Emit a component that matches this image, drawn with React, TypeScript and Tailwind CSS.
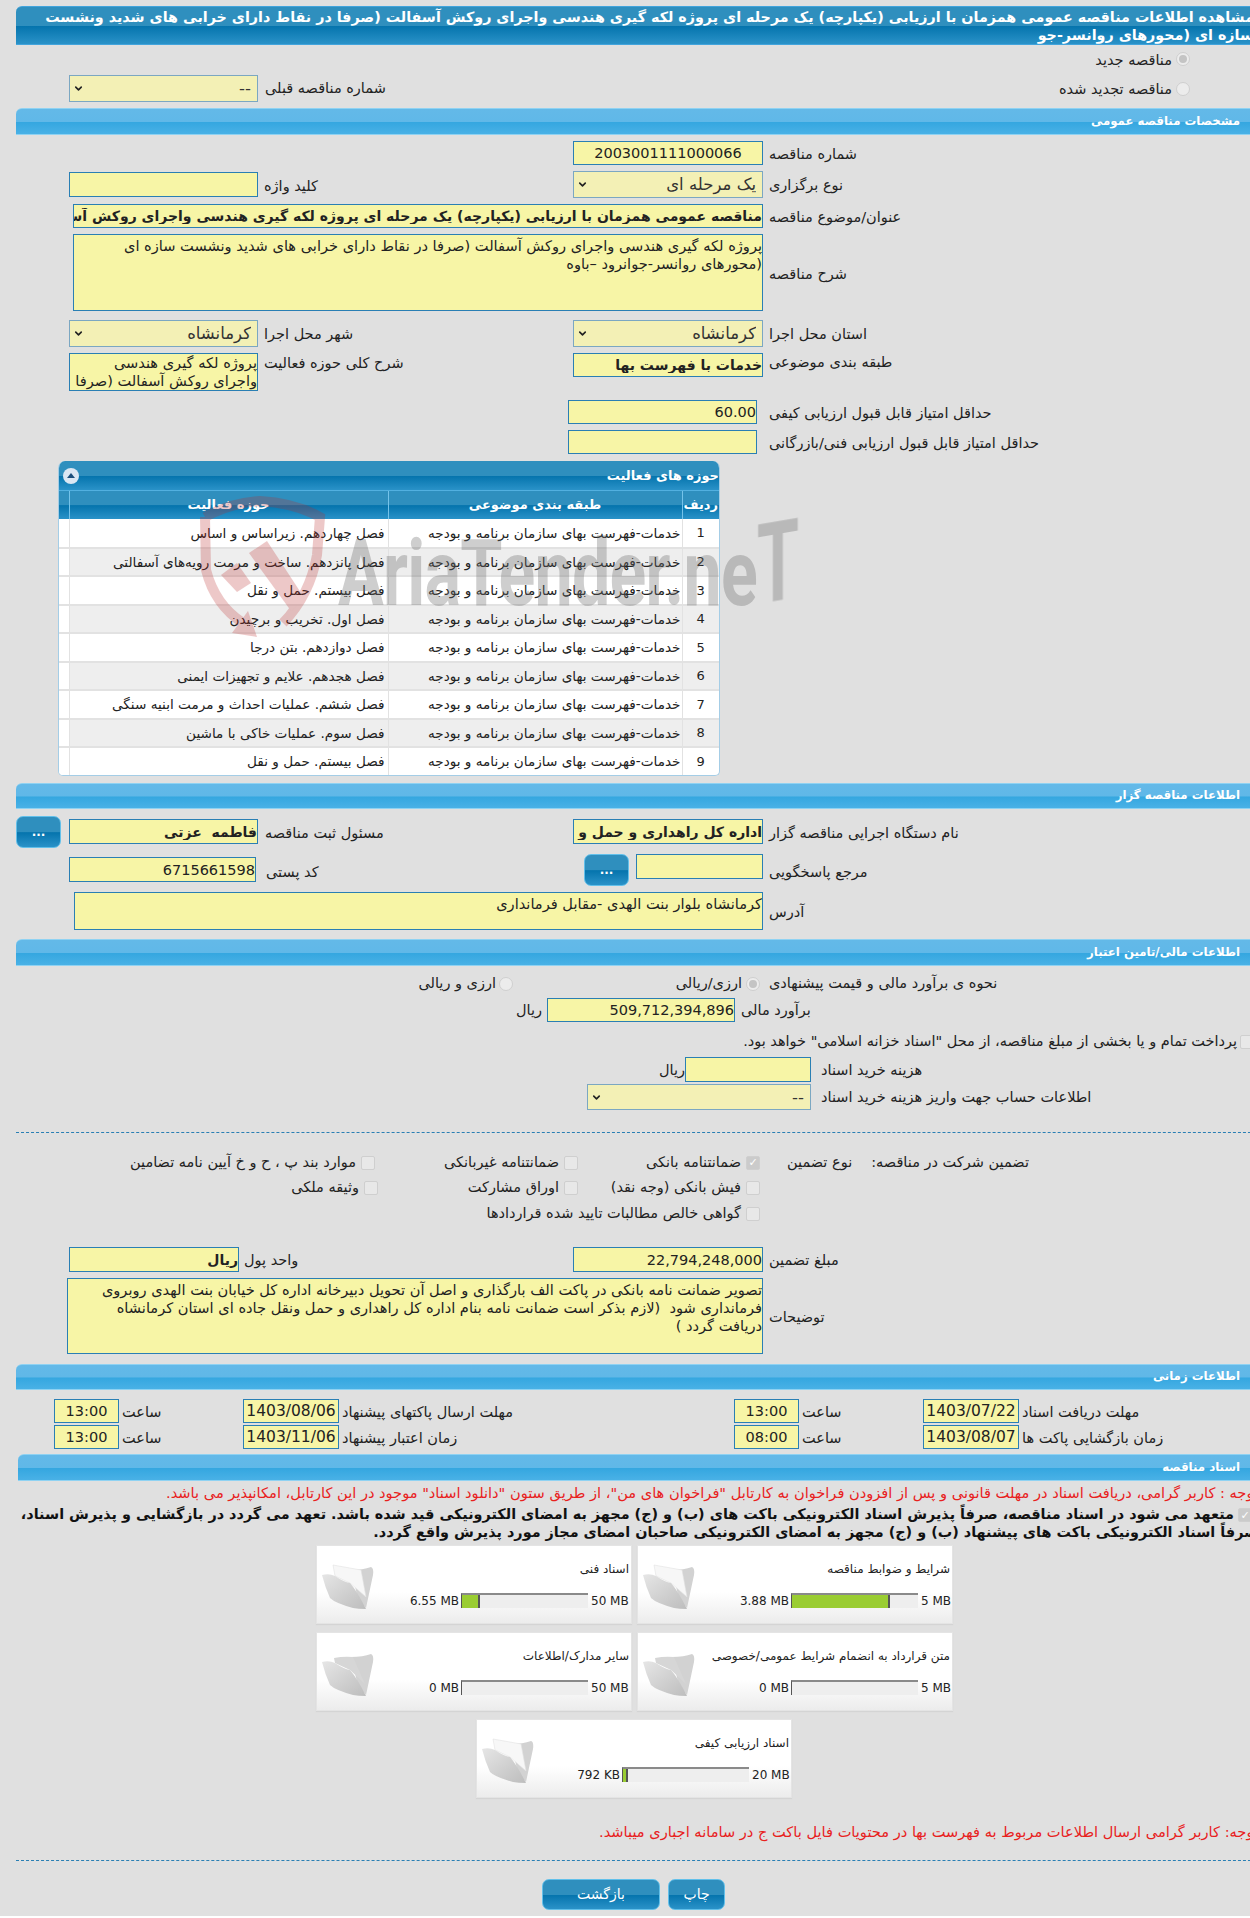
import { ChevronDown } from 'lucide-react';

const darkGloss = 'bg-[linear-gradient(#2f8fbe_0,#2f8fbe_50%,#0574ad_52%,#2a92c8_100%)]';

const SectionBar = ({ title, className = '' }: { title: string; className?: string }) => (
  <div
    dir="rtl"
    className={`flex h-[27px] items-center rounded-tr-none rounded-tl-[6px] border-t border-b border-[#8fd2f2] bg-[linear-gradient(#63b9e8_0,#60b8e8_50%,#35a7e0_54%,#49b1e6_100%)] pr-[22px] text-[11.75px] font-bold text-white ${className}`}
  >
    {title}
  </div>
);

const Field = ({ value = '', className = '' }: { value?: string; className?: string }) => (
  <input
    readOnly
    dir="rtl"
    value={value}
    className={`shrink-0 border border-[#2a7fb4] bg-[#f7f5a6] text-[#222] outline-none ${className}`}
  />
);

const Area = ({ value, className = '' }: { value: string; className?: string }) => (
  <textarea
    readOnly
    dir="rtl"
    wrap="off"
    value={value}
    className={`shrink-0 resize-none overflow-hidden border border-[#2a7fb4] bg-[#f7f5a6] pt-[2px] text-[14.6px] leading-[18px] text-[#222] outline-none ${className}`}
  />
);

const Select = ({ value, className = '' }: { value: string; className?: string }) => (
  <div className={`relative shrink-0 ${className}`}>
    <select
      dir="rtl"
      defaultValue={value}
      className="h-full w-full appearance-none border border-[#7ba7c2] bg-[#f3f0b5] pt-[1px] pr-[6px] text-[16.5px] text-[#333] outline-none"
    >
      <option>{value}</option>
    </select>
    <ChevronDown strokeWidth={3.5} className="pointer-events-none absolute top-[8px] left-[4px] h-[11px] w-[11px] text-[#222]" />
  </div>
);

const Label = ({ text, className = '' }: { text: string; className?: string }) => (
  <span dir="rtl" className={`whitespace-nowrap text-[14.5px] text-[#222] ${className}`}>
    {text}
  </span>
);

const Radio = ({ checked = false }: { checked?: boolean }) => (
  <span className="flex h-[14px] w-[14px] shrink-0 items-center justify-center rounded-full border border-[#cfcfcf] bg-[#ececec]">
    {checked && <span className="h-[8px] w-[8px] rounded-full bg-[#c4c4c4]" />}
  </span>
);

const Check = ({ checked = false }: { checked?: boolean }) => (
  <span className="flex h-[14px] w-[14px] shrink-0 items-center justify-center rounded-[2px] border border-[#cfcfcf] bg-[#e8e8e8] text-[11px] leading-none text-white">
    {checked && <span className="flex h-full w-full items-center justify-center bg-[#cbcbcb]">✓</span>}
  </span>
);

const GlossButton = ({ text, className = '' }: { text: string; className?: string }) => (
  <button
    type="button"
    dir="rtl"
    className={`flex shrink-0 items-center justify-center rounded-[7px] border border-[#62c0ea] text-white ${darkGloss} ${className}`}
  >
    {text}
  </button>
);

const Folder = ({ paper }: { paper: boolean }) => (
  <svg viewBox="0 0 54 46" className="mt-[17px] ml-[3px] h-[46px] w-[54px] shrink-0">
    <defs>
      <linearGradient id="flap" x1="0" y1="0" x2="1" y2="1">
        <stop offset="0" stopColor="#e6e6e6" />
        <stop offset="1" stopColor="#bdbdbd" />
      </linearGradient>
    </defs>
    <path d="M31 7 Q43 7 51 4 Q54 5 53 12 L46 45 L38 36 Z" fill="#d2d2d2" />
    {paper && <path d="M13 2 L41 7 L46 34 L30 20 L15 13 Z" fill="#f7f7f7" stroke="#e2e2e2" strokeWidth="0.6" />}
    {!paper && <path d="M14 8 Q24 6 33 7 L45 34 L30 20 L15 13 Z" fill="#d6d6d6" />}
    <path d="M2 12 Q9 10 15 13 Q24 19 30 20 Q37 28 46 46 Q38 46 33 45 Q15 40 10 35 Q5 24 2 12 Z" fill="url(#flap)" />
  </svg>
);

const DocCard = ({
  title,
  size,
  max,
  percent,
  maxClass,
  paper,
}: {
  title: string;
  size: string;
  max: string;
  percent: number;
  maxClass: string;
  paper: boolean;
}) => (
  <div className="flex h-[79px] w-[316px] shrink-0 border border-[#e4e4e4] bg-[linear-gradient(#fff_0,#fff_60%,#ececec_100%)] shadow-[0_1px_1px_#d4d4d4]">
    <Folder paper={paper} />
    <div className="flex-1">
      <div dir="rtl" className="mt-[14px] h-[18px] pr-[2px] text-[12px] leading-[18px] text-[#222]">
        {title}
      </div>
      <div className="mt-[15px] flex h-[15px] items-center justify-end text-[12px] text-[#222]">
        <span className="mr-[2px] whitespace-nowrap">{size}</span>
        <div className="h-[15px] w-[127px] border-t-2 border-l border-[#8a8a8a] border-l-[#555] bg-[#eeeeee]">
          {percent > 0 && (
            <div className="h-full border-r-2 border-[#555] bg-[#9acd32]" style={{ width: `${percent}%` }} />
          )}
        </div>
        <span className={`whitespace-nowrap pl-[3px] ${maxClass}`}>{max}</span>
      </div>
    </div>
  </div>
);

const rows = [
  'فصل چهاردهم. زیراساس و اساس',
  'فصل پانزدهم. ساخت و مرمت رویه‌های آسفالتی',
  'فصل بیستم. حمل و نقل',
  'فصل اول. تخریب و برچیدن',
  'فصل دوازدهم. بتن درجا',
  'فصل هجدهم. علایم و تجهیزات ایمنی',
  'فصل ششم.  عملیات احداث و مرمت ابنیه سنگی',
  'فصل سوم. عملیات خاکی با ماشین',
  'فصل بیستم. حمل و نقل',
];

const App = () => {
  return (
    <div className="h-[1918px] w-[1250px] overflow-hidden bg-white font-['DejaVu_Sans',sans-serif]">
      <div className="h-[1916px] overflow-hidden bg-[#e0e0e0] pt-[6px] pl-[16px]">
        <div className="w-[1234px]">
          {/* page title */}
          <div
            dir="rtl"
            className={`-mr-[12px] h-[39px] overflow-hidden rounded-tl-[6px] border-y border-[#42a4dc] pt-[1px] pr-[8px] text-[14.3px] leading-[18px] font-bold whitespace-nowrap text-white ${darkGloss}`}
          >
            مشاهده اطلاعات مناقصه عمومی همزمان با ارزیابی (یکپارچه) یک مرحله ای پروژه لکه گیری هندسی واجرای روکش آسفالت (صرفا در نقاط دارای خرابی های شدید ونشست
            <br />
            سازه ای (محورهای روانسر-جو
          </div>

          <div className="mt-[2px] flex h-[24px] items-center justify-end pr-[60px]">
            <Label text="مناقصه جدید" className="mt-[3px] mr-[4px]" />
            <Radio checked />
          </div>
          <div className="mt-[4px] flex h-[27px] items-center">
            <div className="flex flex-1 items-center pl-[53px]">
              <Select value="--" className="h-[27px] w-[189px]" />
              <Label text="شماره مناقصه قبلی" className="mt-[1px] ml-[7px]" />
            </div>
            <div className="mr-[60px] flex items-center">
              <Label text="مناقصه تجدید شده" className="mt-[2px] mr-[4px]" />
              <Radio />
            </div>
          </div>

          <SectionBar title="مشخصات مناقصه عمومی" className="mt-[6px] -mr-[12px]" />

          <div className="mt-[6px] flex h-[24px] pl-[557px]">
            <Field value="2003001111000066" className="h-[24px] w-[190px] text-center text-[14.5px]" />
            <Label text="شماره مناقصه" className="ml-[6px] leading-[26px]" />
          </div>
          <div className="mt-[6px] grid h-[27px] grid-cols-[557px_1fr]">
            <div className="flex pl-[53px]">
              <Field className="mt-[1px] h-[25px] w-[189px]" />
              <Label text="کلید واژه" className="ml-[6px] leading-[30px]" />
            </div>
            <div className="flex">
              <Select value="یک مرحله ای" className="h-[27px] w-[190px]" />
              <Label text="نوع برگزاری" className="ml-[6px] leading-[29px]" />
            </div>
          </div>
          <div className="mt-[6px] flex h-[24px] pl-[57px]">
            <Field
              value="مناقصه عمومی همزمان با ارزیابی (یکپارچه) یک مرحله ای پروژه لکه گیری هندسی واجرای روکش آسفالت"
              className="h-[24px] w-[690px] text-[14px] font-bold"
            />
            <Label text="عنوان/موضوع مناقصه" className="ml-[6px] leading-[26px]" />
          </div>
          <div className="mt-[6px] flex h-[77px] items-center pl-[57px]">
            <Area
              value={'پروژه لکه گیری هندسی واجرای روکش آسفالت (صرفا در نقاط دارای خرابی های شدید ونشست سازه ای\n(محورهای روانسر-جوانرود –باوه'}
              className="h-[77px] w-[690px]"
            />
            <Label text="شرح مناقصه" className="mt-[4px] ml-[6px]" />
          </div>
          <div className="mt-[9px] grid h-[27px] grid-cols-[557px_1fr]">
            <div className="flex pl-[53px]">
              <Select value="کرمانشاه" className="h-[27px] w-[189px]" />
              <Label text="شهر محل اجرا" className="ml-[6px] leading-[29px]" />
            </div>
            <div className="flex">
              <Select value="کرمانشاه" className="h-[27px] w-[190px]" />
              <Label text="استان محل اجرا" className="ml-[6px] leading-[29px]" />
            </div>
          </div>
          <div className="mt-[6px] grid h-[38px] grid-cols-[557px_1fr]">
            <div className="flex pl-[53px]">
              <Area
                value={'پروژه لکه گیری هندسی\nواجرای روکش آسفالت (صرفا'}
                className="h-[38px] w-[189px] !pt-0"
              />
              <Label text="شرح کلی حوزه فعالیت" className="ml-[6px] leading-[20px]" />
            </div>
            <div className="flex">
              <Field value="خدمات با فهرست بها" className="h-[24px] w-[190px] text-[14px] font-bold" />
              <Label text="طبقه بندی موضوعی" className="ml-[6px] leading-[19px]" />
            </div>
          </div>
          <div className="mt-[9px] flex h-[24px] pl-[552px]">
            <Field value="60.00" className="h-[24px] w-[189px] text-[14.5px]" />
            <Label text="حداقل امتیاز قابل قبول ارزیابی کیفی" className="ml-[12px] leading-[26px]" />
          </div>
          <div className="mt-[6px] flex h-[24px] pl-[552px]">
            <Field className="h-[24px] w-[189px]" />
            <Label text="حداقل امتیاز قابل قبول ارزیابی فنی/بازرگانی" className="ml-[12px] leading-[26px]" />
          </div>

          {/* activity table with watermark on top */}
          <div className="relative mt-[7px] ml-[42px] h-[315px] w-[662px]">
            <div className="h-full overflow-hidden rounded-t-[7px] rounded-b-[5px] border-x border-b border-[#a4cde6] bg-white">
              <div
                dir="rtl"
                className={`flex h-[30px] items-center justify-between border-b border-[#52b0e0] pr-0 pl-[4px] text-[13px] font-bold text-white ${darkGloss}`}
              >
                <span>حوزه های فعالیت</span>
                <span className="flex h-[16px] w-[16px] items-center justify-center rounded-full bg-[#dbe7f3]">
                  <span className="h-0 w-0 border-x-[4px] border-b-[5px] border-x-transparent border-b-[#1d4f7c]" />
                </span>
              </div>
              <table dir="rtl" className="w-full table-fixed border-collapse text-[13.6px] text-[#222]">
                <thead>
                  <tr className={`h-[28px] text-[13px] font-bold text-white ${darkGloss}`}>
                    <th className="w-[37px] border-l border-[#75c3ea] font-bold">ردیف</th>
                    <th className="w-[294px] border-l border-[#75c3ea] font-bold">طبقه بندی موضوعی</th>
                    <th className="w-[319px] border-l border-[#75c3ea] font-bold">حوزه فعالیت</th>
                    <th />
                  </tr>
                </thead>
                <tbody>
                  {rows.map((r, i) => (
                    <tr key={i} className="h-[28.5px] border-b-2 border-[#e2e2e2] even:bg-[#eeeeee]">
                      <td className="border-l border-[#e2e2e2] text-center text-[13px]">{i + 1}</td>
                      <td className="border-l border-[#e2e2e2] pr-[1px] whitespace-nowrap">خدمات-فهرست بهای سازمان برنامه و بودجه</td>
                      <td className="border-l border-[#e2e2e2] pr-[3px] whitespace-nowrap">{r}</td>
                      <td className="bg-white" />
                    </tr>
                  ))}
                </tbody>
              </table>
            </div>

            <svg viewBox="0 0 135 150" className="pointer-events-none absolute top-[34px] left-[137px] h-[150px] w-[135px] opacity-25" aria-hidden="true">
              <g fill="none" stroke="#bb2a2a" strokeWidth="10">
                <path d="M10 22 Q35 8 65 6 Q100 8 125 22 L122 60 Q115 100 88 128" />
                <path d="M10 22 L11 75 Q20 110 48 128" />
              </g>
              <g fill="#bb2a2a">
                <path d="M37 138 L62 142 L53 116 Z" />
                <path d="M54 58 L72 46 L110 104 L96 116 Z" />
                <path d="M26 80 L42 68 L56 88 L42 97 Z" />
              </g>
            </svg>
            <div
              aria-hidden="true"
              className="pointer-events-none absolute top-[58px] left-[280px] h-[110px] w-[480px] font-['Roboto',sans-serif] text-[92px] leading-[110px] font-bold tracking-[-1px] whitespace-nowrap text-[#6b6b6b] opacity-[0.33]"
            >
              <span className="inline-block origin-left scale-x-[0.74]">
                AriaTender.ne<span className="inline-block origin-bottom scale-y-[1.2] -skew-y-6">T</span>
              </span>
            </div>
          </div>

          <SectionBar title="اطلاعات مناقصه گزار" className="mt-[7px] -mr-[12px] !h-[26px]" />

          <div className="mt-[7px] grid h-[32px] grid-cols-[557px_1fr]">
            <div className="flex">
              <GlossButton text="..." className="h-[32px] w-[45px] text-[12px] font-bold" />
              <Field value="فاطمه  عزتی" className="mt-[3px] ml-[8px] h-[25px] w-[189px] text-[14px] font-bold" />
              <Label text="مسئول ثبت مناقصه" className="ml-[7px] leading-[34px]" />
            </div>
            <div className="flex">
              <Field value="اداره کل راهداری و حمل و نقل جاده ای استان کرمانشاه" className="mt-[3px] h-[25px] w-[190px] text-[14px] font-bold" />
              <Label text="نام دستگاه اجرایی مناقصه گزار" className="ml-[6px] leading-[34px]" />
            </div>
          </div>
          <div className="mt-[6px] grid h-[32px] grid-cols-[557px_1fr]">
            <div className="flex pl-[53px]">
              <Field value="6715661598" className="mt-[3px] h-[25px] w-[187px] text-[14.5px]" />
              <Label text="کد پستی" className="ml-[10px] leading-[36px]" />
            </div>
            <div className="flex">
              <GlossButton text="..." className="ml-[11px] h-[32px] w-[45px] text-[12px] font-bold" />
              <Field className="ml-[7px] h-[25px] w-[127px]" />
              <Label text="مرجع پاسخگویی" className="ml-[6px] leading-[36px]" />
            </div>
          </div>
          <div className="mt-[6px] flex h-[38px] items-center pl-[58px]">
            <Area value="کرمانشاه بلوار بنت الهدی -مقابل فرمانداری" className="h-[38px] w-[689px]" />
            <Label text="آدرس" className="mt-[3px] ml-[6px]" />
          </div>

          <SectionBar title="اطلاعات مالی/تامین اعتبار" className="mt-[9px] -mr-[12px]" />

          <div className="mt-[6px] flex h-[24px] items-center">
            <div className="flex w-[497px] items-center justify-end">
              <Label text="ارزی و ریالی" className="mr-[3px]" />
              <Radio />
            </div>
            <div className="flex w-[247px] items-center justify-end">
              <Label text="ارزی/ریالی" className="mr-[4px]" />
              <Radio checked />
            </div>
            <Label text="نحوه ی برآورد مالی و قیمت پیشنهادی" className="ml-[9px]" />
          </div>
          <div className="mt-[2px] flex h-[24px] items-center">
            <Label text="ریال" className="mt-[1px] w-[526px] text-right" />
            <Field value="509,712,394,896" className="ml-[5px] h-[24px] w-[188px] text-[14.5px]" />
            <Label text="برآورد مالی" className="mt-[1px] ml-[6px]" />
          </div>
          <div className="mt-[10px] flex h-[20px] w-[1238px] items-center justify-end">
            <Label text={'پرداخت تمام و یا بخشی از مبلغ مناقصه، از محل "اسناد خزانه اسلامی" خواهد بود.'} className="mr-[3px]" />
            <Check />
          </div>
          <div className="mt-[5px] flex h-[25px] items-center">
            <Label text="ریال" className="mt-[3px] w-[669px] text-right" />
            <Field className="h-[25px] w-[126px]" />
            <Label text="هزینه خرید اسناد" className="mt-[3px] ml-[10px]" />
          </div>
          <div className="mt-[2px] flex h-[26px] items-center pl-[571px]">
            <Select value="--" className="h-[26px] w-[224px]" />
            <Label text="اطلاعات حساب جهت واریز هزینه خرید اسناد" className="mt-[1px] ml-[10px]" />
          </div>

          <div className="mt-[22px] -mr-[16px] border-t border-dashed border-[#2a7fb4]" />

          {/* guarantee types */}
          <div className="mt-[17px] flex h-[25px] items-center">
            <div className="flex w-[359px] items-center justify-end">
              <Label text="موارد بند پ ، ح و خ آیین نامه تضامین" className="mr-[5px]" />
              <Check />
            </div>
            <div className="flex w-[203px] items-center justify-end">
              <Label text="ضمانتنامه غیربانکی" className="mr-[5px]" />
              <Check />
            </div>
            <div className="flex w-[182px] items-center justify-end">
              <Label text="ضمانتنامه بانکی" className="mr-[5px]" />
              <Check checked />
            </div>
            <Label text="نوع تضمین" className="ml-[27px]" />
            <Label text="تضمین شرکت در مناقصه:" className="ml-[19px]" />
          </div>
          <div className="flex h-[26px] items-center">
            <div className="flex w-[362px] items-center justify-end">
              <Label text="وثیقه ملکی" className="mr-[5px]" />
              <Check />
            </div>
            <div className="flex w-[200px] items-center justify-end">
              <Label text="اوراق مشارکت" className="mr-[5px]" />
              <Check />
            </div>
            <div className="flex w-[182px] items-center justify-end">
              <Label text="فیش بانکی (وجه نقد)" className="mr-[5px]" />
              <Check />
            </div>
          </div>
          <div className="flex h-[25px] items-center justify-end pr-[490px]">
            <Label text="گواهی خالص مطالبات تایید شده قراردادها" className="mr-[5px]" />
            <Check />
          </div>

          <div className="mt-[21px] grid h-[25px] grid-cols-[557px_1fr]">
            <div className="flex pl-[53px]">
              <Field value="ریال" className="h-[25px] w-[170px] text-[14px] font-bold" />
              <Label text="واحد پول" className="ml-[5px] leading-[27px]" />
            </div>
            <div className="flex">
              <Field value="22,794,248,000" className="h-[25px] w-[190px] text-[14.5px]" />
              <Label text="مبلغ تضمین" className="ml-[6px] leading-[27px]" />
            </div>
          </div>
          <div className="mt-[6px] flex h-[76px] items-center pl-[51px]">
            <Area
              value={'تصویر ضمانت نامه بانکی در پاکت الف بارگذاری و اصل آن تحویل دبیرخانه اداره کل خیابان بنت الهدی روبروی\nفرمانداری شود  (لازم بذکر است ضمانت نامه بنام اداره کل راهداری و حمل ونقل جاده ای استان کرمانشاه\nدریافت گردد )'}
              className="h-[76px] w-[696px]"
            />
            <Label text="توضیحات" className="mt-[3px] ml-[6px]" />
          </div>

          <SectionBar title="اطلاعات زمانی" className="mt-[10px] -mr-[12px] !h-[26px]" />

          {[
            [['13:00', '1403/08/06', 'مهلت ارسال پاکتهای پیشنهاد'], ['13:00', '1403/07/22', 'مهلت دریافت اسناد']],
            [['13:00', '1403/11/06', 'زمان اعتبار پیشنهاد'], ['08:00', '1403/08/07', 'زمان بازگشایی پاکت ها']],
          ].map((line, i) => (
            <div key={i} className="mt-[9px] flex h-[24px] pl-[38px] [&+&]:mt-[2px]">
              {line.map((g, j) => (
                <div key={j} className="flex w-[680px] shrink-0">
                  <div className="flex w-[189px] shrink-0">
                    <Field value={g[0]} className="h-[24px] w-[65px] text-center text-[14.5px]" />
                    <Label text="ساعت" className="ml-[3px] leading-[26px]" />
                  </div>
                  <Field value={g[1]} className="h-[24px] w-[96px] text-center text-[15.5px]" />
                  <Label text={g[2]} className="ml-[3px] leading-[26px]" />
                </div>
              ))}
            </div>
          ))}

          <SectionBar title="اسناد مناقصه" className="mt-[5px] ml-[2px] -mr-[12px] rounded-tr-[6px]" />

          <div dir="rtl" className="mt-[4px] -mr-[8px] h-[16px] text-[14.6px] leading-[16px] whitespace-nowrap text-[#e8211d]">
            توجه : کاربر گرامی، دریافت اسناد در مهلت قانونی و پس از افزودن فراخوان به کارتابل "فراخوان های من"، از طریق ستون "دانلود اسناد" موجود در این کارتابل، امکانپذیر می باشد.
          </div>
          <div dir="rtl" className="mt-[4px] -mr-[8px] h-[36px] text-[14.4px] leading-[18px] font-bold whitespace-nowrap text-[#111]">
            <span className="mr-[6px] ml-[4px] inline-block align-middle">
              <Check checked />
            </span>
            متعهد می شود در اسناد مناقصه، صرفاً پذیرش اسناد الکترونیکی باکت های (ب) و (ج) مجهز به امضای الکترونیکی قید شده باشد. تعهد می گردد در بازگشایی و پذیرش اسناد،
            <br />
            صرفاً اسناد الکترونیکی باکت های پیشنهاد (ب) و (ج) مجهز به امضای الکترونیکی صاحبان امضای مجاز مورد پذیرش واقع گردد.
          </div>

          {/* document cards */}
          <div className="mt-[4px] ml-[300px] flex gap-[5px]">
            <DocCard title="اسناد فنی" size="6.55 MB" max="50 MB" percent={14} maxClass="w-[43px]" paper />
            <DocCard title="شرایط و ضوابط مناقصه" size="3.88 MB" max="5 MB" percent={77.6} maxClass="w-[34px]" paper />
          </div>
          <div className="mt-[8px] ml-[300px] flex gap-[5px]">
            <DocCard title="سایر مدارک/اطلاعات" size="0 MB" max="50 MB" percent={0} maxClass="w-[43px]" paper={false} />
            <DocCard title="متن قرارداد به انضمام شرایط عمومی/خصوصی" size="0 MB" max="5 MB" percent={0} maxClass="w-[34px]" paper={false} />
          </div>
          <div className="mt-[8px] ml-[460px]">
            <DocCard title="اسناد ارزیابی کیفی" size="792 KB" max="20 MB" percent={3.9} maxClass="w-[42px]" paper />
          </div>

          <div dir="rtl" className="mt-[26px] -mr-[8px] h-[16px] text-[14.6px] leading-[16px] whitespace-nowrap text-[#e8211d]">
            توجه: کاربر گرامی ارسال اطلاعات مربوط به فهرست بها در محتویات فایل باکت ج در سامانه اجباری میباشد.
          </div>

          <div className="mt-[20px] -mr-[16px] border-t border-dashed border-[#2a7fb4]" />

          <div className="mt-[18px] flex gap-[8px] pl-[526px]">
            <GlossButton text="بازگشت" className="h-[31px] w-[118px] text-[14px]" />
            <GlossButton text="چاپ" className="h-[31px] w-[57px] text-[14px]" />
          </div>
        </div>
      </div>
    </div>
  );
};

export default App;
